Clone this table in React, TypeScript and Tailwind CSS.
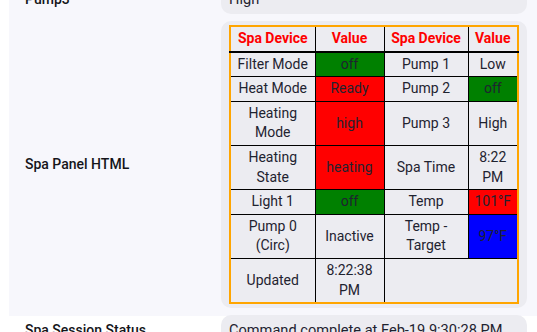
type Cell = {
  text: string;
  bg?: string;
};

type Row = {
  left: [Cell, Cell];
  right?: [Cell, Cell];
};

const rows: Row[] = [
  { left: [{ text: "Filter Mode" }, { text: "off", bg: "bg-[#008000]" }], right: [{ text: "Pump 1" }, { text: "Low" }] },
  { left: [{ text: "Heat Mode" }, { text: "Ready", bg: "bg-[#ff0000]" }], right: [{ text: "Pump 2" }, { text: "off", bg: "bg-[#008000]" }] },
  { left: [{ text: "Heating Mode" }, { text: "high", bg: "bg-[#ff0000]" }], right: [{ text: "Pump 3" }, { text: "High" }] },
  { left: [{ text: "Heating State" }, { text: "heating", bg: "bg-[#ff0000]" }], right: [{ text: "Spa Time" }, { text: "8:22 PM" }] },
  { left: [{ text: "Light 1" }, { text: "off", bg: "bg-[#008000]" }], right: [{ text: "Temp" }, { text: "101°F", bg: "bg-[#ff0000]" }] },
  { left: [{ text: "Pump 0 (Circ)" }, { text: "Inactive" }], right: [{ text: "Temp - Target" }, { text: "97°F", bg: "bg-[#0000ff]" }] },
  { left: [{ text: "Updated" }, { text: "8:22:38 PM" }] },
];

function Td({ cell }: { cell: Cell }) {
  return (
    <td className={`border border-black px-1 py-[2px] text-center ${cell.bg ?? ""}`}>
      {cell.text}
    </td>
  );
}

function SpaTable() {
  return (
    <table className="w-full table-fixed border-collapse border-2 border-[#ffa500] text-[14px] leading-[19.6px] text-[#1f2330]">
      <colgroup>
        <col className="w-[85px]" />
        <col className="w-[69px]" />
        <col className="w-[84px]" />
        <col />
      </colgroup>
      <thead>
        <tr className="font-bold text-[#ff0000]">
          <th className="border border-b-2 border-black py-[2px]">Spa Device</th>
          <th className="border border-b-2 border-black py-[2px]">Value</th>
          <th className="border border-b-2 border-black py-[2px]">Spa Device</th>
          <th className="border border-b-2 border-black py-[2px]">Value</th>
        </tr>
      </thead>
      <tbody>
        {rows.map((row, idx) => (
          <tr key={idx}>
            <Td cell={row.left[0]} />
            <Td cell={row.left[1]} />
            {row.right ? (
              <>
                <Td cell={row.right[0]} />
                <Td cell={row.right[1]} />
              </>
            ) : (
              <td colSpan={2} className="border border-black" />
            )}
          </tr>
        ))}
      </tbody>
    </table>
  );
}

function Field({ label, children, pad = "py-[5px]" }: { label: string; children: React.ReactNode; pad?: string }) {
  return (
    <div className="grid grid-cols-[196px_1fr] items-center">
      <div className="text-[14px] font-medium text-[#15151a]">{label}</div>
      <div className={`rounded-[10px] bg-[#ececf1] px-2 ${pad} text-[14.6px] leading-5 text-[#1f2330]`}>
        {children}
      </div>
    </div>
  );
}

export default function App() {
  return (
    <div className="h-[332px] overflow-hidden bg-white font-['Roboto',sans-serif]">
      <div className="ml-[9px] h-full bg-[#f7f7fc]">
        <div className="-mt-[16px] flex flex-col gap-[7px] pl-4 pr-[10px]">
          <Field label="Pump3">High</Field>
          <Field label="Spa Panel HTML" pad="py-1">
            <SpaTable />
          </Field>
          <Field label="Spa Session Status">Command complete at Feb-19 9:30:28 PM</Field>
        </div>
      </div>
    </div>
  );
}
